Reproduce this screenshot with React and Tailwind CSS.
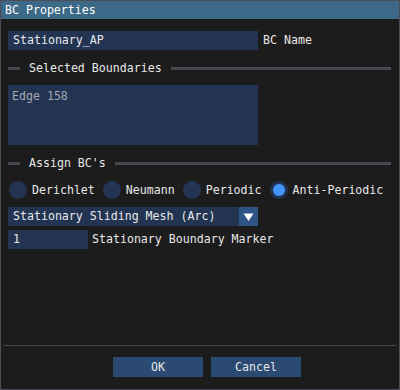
const font = { fontFamily: '"DejaVu Sans Mono", "Liberation Mono", monospace' };

const SeparatorText = ({ label }) => (
  <div className="flex items-center h-[13px]">
    <div className="w-[12px] h-[3px] bg-[#46464f]"></div>
    <span className="ml-[9px] mr-[9px] whitespace-pre leading-[13px]">{label}</span>
    <div className="flex-1 h-[3px] bg-[#46464f] mr-[1px]"></div>
  </div>
);

const Radio = ({ label, checked }) => (
  <div className="flex items-center">
    <div className="w-[18px] h-[18px] rounded-full bg-[#223452] flex items-center justify-center">
      {checked && <div className="w-[12px] h-[12px] rounded-full bg-[#4296fa]"></div>}
    </div>
    <span className="ml-[5px] leading-[18px]">{label}</span>
  </div>
);

export default function App() {
  return (
    <div
      className="w-[400px] h-[390px] bg-[#1c1c1c] border border-[#4d4d58] flex flex-col text-[#e8e8e8] text-[11.6px]"
      style={font}
    >
      {/* title bar */}
      <div className="h-[18px] bg-[#3c6987] pl-[4px] leading-[18px] text-white">BC Properties</div>

      <div className="flex flex-col px-[7px]">
        <div className="mt-[12px] flex items-center">
          <div className="w-[250px] h-[19px] bg-[#223452] pl-[5px] leading-[19px]">Stationary_AP</div>
          <span className="ml-[5px]">BC Name</span>
        </div>

        <div className="mt-[12px]">
          <SeparatorText label="Selected Boundaries" />
        </div>

        <div className="mt-[10px] w-[250px] h-[60px] bg-[#223452] pl-[4px] pt-[4px] text-[#a3a8b2] leading-[15px]">
          Edge 158
        </div>

        <div className="mt-[12px]">
          <SeparatorText label="Assign BC's" />
        </div>

        <div className="mt-[11px] flex items-center gap-[8px] pl-[1px]">
          <Radio label="Derichlet" />
          <Radio label="Neumann" />
          <Radio label="Periodic" />
          <Radio label="Anti-Periodic" checked />
        </div>

        <div className="mt-[8px] w-[250px] h-[19px] bg-[#223452] flex">
          <span className="flex-1 pl-[5px] leading-[19px] whitespace-pre">Stationary Sliding Mesh (Arc)</span>
          <div className="w-[19px] h-[19px] bg-[#2e5585] flex items-center justify-center">
            <svg width="11" height="10" viewBox="0 0 11 10">
              <polygon points="0.5,1.5 10.5,1.5 5.5,9" fill="#ffffff" />
            </svg>
          </div>
        </div>

        <div className="mt-[4px] flex items-center">
          <div className="w-[80px] h-[19px] bg-[#223452] pl-[5px] leading-[19px]">1</div>
          <span className="ml-[4px]">Stationary Boundary Marker</span>
        </div>
      </div>

      <div className="flex-1"></div>

      <div className="mx-[3px] h-[1px] bg-[#46464f]"></div>

      <div className="mt-[11px] mb-[12px] flex gap-[8px] pl-[112px]">
        <button className="w-[90px] h-[20px] bg-[#2a4a72] text-center leading-[20px]">OK</button>
        <button className="w-[90px] h-[20px] bg-[#2a4a72] text-center leading-[20px]">Cancel</button>
      </div>
    </div>
  );
}
